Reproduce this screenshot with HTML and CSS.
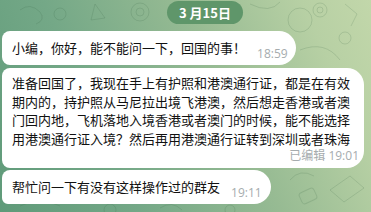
FILE: index.html
```html
<!DOCTYPE html>
<html lang="zh">
<head>
<meta charset="utf-8">
<link rel="stylesheet" href="styles.css">
</head>
<body>
<div class="chat">
  <svg class="doodles" width="371" height="212" viewBox="0 0 371 212" aria-hidden="true">
    <g fill="none" stroke="#2f5e3c" stroke-opacity="0.16" stroke-width="1">
      <path d="M20 10 q10 -8 20 2 q6 8 -4 12"/>
      <circle cx="60" cy="14" r="6"/>
      <path d="M95 4 l10 14 l-14 2 z"/>
      <circle cx="140" cy="12" r="9"/>
      <circle cx="140" cy="12" r="4"/>
      <path d="M250 4 q20 10 30 -2"/>
      <circle cx="300" cy="20" r="12"/>
      <circle cx="320" cy="10" r="7"/>
      <circle cx="320" cy="10" r="3"/>
      <path d="M345 4 l12 10 l-6 12"/>
      <path d="M300 50 q25 -10 40 10"/>
      <circle cx="345" cy="38" r="6"/>
      <path d="M330 190 l20 -14 l14 12 l-20 14 z"/>
      <path d="M290 180 q10 -12 24 -4"/>
      <rect x="300" y="190" width="16" height="12" rx="3" transform="rotate(-25 308 196)"/>
      <path d="M20 206 q20 -10 40 0"/>
      <circle cx="110" cy="210" r="6"/>
      <path d="M160 208 q12 -8 22 2"/>
      <circle cx="230" cy="210" r="5"/>
    </g>
  </svg>
  <div class="date">3 月15日</div>
  <div class="bubble b1">
    <span class="text">小编，你好，能不能问一下，回国的事！</span>
    <span class="time">18:59</span>
  </div>
  <div class="bubble b2">
    <div class="text">准备回国了，我现在手上有护照和港澳通行证，都是在有效期内的，持护照从马尼拉出境飞港澳，然后想走香港或者澳门回内地，飞机落地入境香港或者澳门的时候，能不能选择用港澳通行证入境？然后再用港澳通行证转到深圳或者珠海</div>
    <div class="meta">已编辑 19:01</div>
  </div>
  <div class="bubble b3">
    <span class="text">帮忙问一下有没有这样操作过的群友</span>
    <span class="time">19:11</span>
  </div>
</div>
</body>
</html>
```
FILE: styles.css
```css
html, body {
  margin: 0;
  padding: 0;
}
body {
  width: 371px;
  height: 212px;
  overflow: hidden;
  font-family: "Noto Sans CJK SC", "Open Sans", sans-serif;
}
.chat {
  position: relative;
  width: 371px;
  height: 212px;
  box-sizing: border-box;
  padding: 1px 0 0 2px;
  display: flex;
  flex-direction: column;
  align-items: flex-start;
  background: linear-gradient(65deg, #5f9a79 0%, #74a887 30%, #97bb93 60%, #b7d0a4 85%, #c2d7aa 100%);
}
.doodles {
  position: absolute;
  left: 0;
  top: 0;
}
.date {
  position: relative;
  margin-left: 165px;
  height: 23px;
  line-height: 23px;
  padding: 0 12px;
  border-radius: 12px;
  background: #5f966a;
  color: #fff;
  font-weight: 700;
  font-size: 13px;
  font-family: "Noto Sans CJK SC", "Open Sans", sans-serif;
  letter-spacing: 0;
}
.bubble {
  position: relative;
  background: #fff;
  color: #111;
  font-size: 13px;
  line-height: 18px;
  box-sizing: border-box;
  border-radius: 8px 17px 17px 8px;
}
.b1 {
  margin-top: 7px;
  display: flex;
  align-items: flex-end;
  padding: 8px 8px 8px 10px;
  height: 34px;
}
.b2 {
  margin-top: 3px;
  width: 362px;
  height: 100px;
  padding: 6px 5px 4px 10px;
  line-height: 18.6px;
}
.b3 {
  margin-top: 2px;
  display: flex;
  align-items: flex-end;
  padding: 8px 9px 8px 10px;
  height: 34px;
  border-radius: 8px 17px 17px 6px;
}
.time {
  margin-left: 11px;
  margin-bottom: -4px;
  font-family: "Open Sans", sans-serif;
  font-size: 12px;
  line-height: 14px;
  color: #a6acae;
}
.meta {
  text-align: right;
  font-size: 12px;
  line-height: 16px;
  color: #a6acae;
  font-family: "Open Sans", "Noto Sans CJK SC", sans-serif;
}
```
